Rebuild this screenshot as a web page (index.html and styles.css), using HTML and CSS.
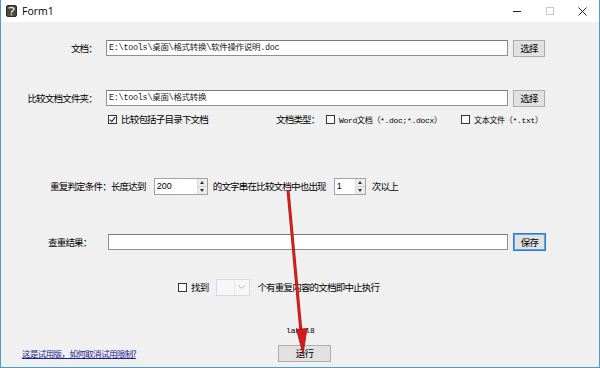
FILE: index.html
```html
<!DOCTYPE html>
<html lang="zh-CN">

<head>
    <meta charset="UTF-8">
    <meta name="viewport" content="width=device-width, initial-scale=1.0">
    <title>Form1</title>

    <link rel="stylesheet" href="styles.css">
</head>

<body>
    <div class="window">
        <div class="titlebar">
            <svg class="app-icon" width="11" height="12" viewBox="0 0 11 12">
                <rect x="0.5" y="0.5" width="10" height="11" rx="1.5" fill="#4a4a42" stroke="#2a2a26" />
                <path d="M3 3.5 C3 2, 8 2, 8 4 C8 6, 5 5.5, 5.5 8" fill="none" stroke="#e8e2c8" stroke-width="1.4" />
                <circle cx="5.5" cy="9.6" r="0.9" fill="#e8e2c8" />
            </svg>
            <span class="caption">Form1</span>
            <div class="caption-btns">
                <span class="cbtn"><i class="ico-min"></i></span>
                <span class="cbtn"><i class="ico-max"></i></span>
                <span class="cbtn">
                    <svg width="9" height="9" viewBox="0 0 9 9">
                        <path d="M0.5 0.5 L8.5 8.5 M8.5 0.5 L0.5 8.5" stroke="#222" stroke-width="1" />
                    </svg>
                </span>
            </div>
        </div>

        <div class="client">
            <div class="row row-doc">
                <span class="lbl">文档：</span>
                <div class="field">E:\tools\桌面\格式转换\软件操作说明.doc</div>
                <button class="btn">选择</button>
            </div>

            <div class="row row-dir">
                <span class="lbl">比较文档文件夹：</span>
                <div class="field">E:\tools\桌面\格式转换</div>
                <button class="btn">选择</button>
            </div>

            <div class="row row-opts">
                <label class="check check-sub"><span class="box checked"></span>比较包括子目录下文档</label>
                <span class="type-lbl">文档类型：</span>
                <label class="check check-word"><span class="box"></span><span class="mono">Word文档（*.doc;*.docx）</span></label>
                <label class="check"><span class="box"></span><span class="mono">文本文件（*.txt）</span></label>
            </div>

            <div class="row row-cond">
                <span>重复判定条件：长度达到</span>
                <div class="spin spin-len">
                    <span class="spin-val">200</span>
                    <span class="spin-btns"><i class="up"></i><i class="down"></i></span>
                </div>
                <span class="after-len">的文字串在比较文档中也出现</span>
                <div class="spin spin-count">
                    <span class="spin-val">1</span>
                    <span class="spin-btns"><i class="up"></i><i class="down"></i></span>
                </div>
                <span class="after-count">次以上</span>
            </div>

            <div class="row row-result">
                <span class="lbl-result">查重结果：</span>
                <div class="field field-result"></div>
                <button class="btn btn-default">保存</button>
            </div>

            <div class="row row-stop">
                <label class="check"><span class="box"></span>找到</label>
                <div class="combo">
                    <span class="combo-val"></span>
                    <svg width="7" height="4" viewBox="0 0 7 4">
                        <path d="M0.5 0.5 L3.5 3.5 L6.5 0.5" fill="none" stroke="#b5b5b5" />
                    </svg>
                </div>
                <span class="after-combo">个有重复内容的文档即中止执行</span>
            </div>

            <div class="row row-label8">
                <span class="label8">label8</span>
            </div>

            <div class="row row-run">
                <div class="link-cell"><a class="trial-link" href="#">这是试用版，如何取消试用限制?</a></div>
                <button class="btn btn-run">运行</button>
            </div>
        </div>
    </div>

    <!-- red arrow drawn over the form -->
    <svg class="arrow" viewBox="0 0 600 368">
        <line x1="288" y1="190" x2="301" y2="332" stroke="#b81616" stroke-width="3" />
        <line x1="288" y1="190" x2="301" y2="332" stroke="#dc2020" stroke-width="1.4" />
        <polygon points="303,354 296.5,329.5 307,328.5" fill="#d41a1a" stroke="#a81010" stroke-width="0.8" />
    </svg>
</body>

</html>
```

FILE: styles.css
```css
* {
    box-sizing: border-box;
}

body {
    position: relative;
    margin: 0;
    font-family: "Noto Sans CJK SC", sans-serif;
    font-size: 9.5px;
    letter-spacing: -0.8px;
    color: #000;
}

.window {
    width: 600px;
    height: 368px;
    display: flex;
    flex-direction: column;
    background: #f0f0f0;
    border: 1px solid #4b9cc8;
    border-top: 0;
}

/* title bar */

.titlebar {
    flex: none;
    height: 22px;
    display: flex;
    align-items: center;
    padding-left: 5px;
    background: #fff;
}

.caption {
    margin-left: 5px;
    font-family: "Open Sans", "Noto Sans", sans-serif;
    font-size: 10.5px;
    letter-spacing: 0;
    color: #000;
}

.caption-btns {
    margin-left: auto;
    display: flex;
    height: 100%;
}

.cbtn {
    width: 33px;
    display: flex;
    align-items: center;
    justify-content: center;
}

.ico-min {
    width: 8px;
    height: 1px;
    background: #222;
}

.ico-max {
    width: 8px;
    height: 8px;
    border: 1px solid #c6c6c6;
}

/* client area */

.client {
    flex: 1;
    display: flex;
    flex-direction: column;
}

.row {
    flex: none;
    height: 18px;
    display: flex;
    align-items: center;
    white-space: nowrap;
}

.row-doc {
    margin-top: 17px;
}

.row-dir {
    margin-top: 32px;
}

.row-opts {
    margin-top: 4px;
    height: 16px;
    padding-left: 107px;
}

.row-cond {
    margin-top: 50px;
    padding-left: 49px;
}

.row-result {
    margin-top: 37px;
    height: 19px;
    padding-left: 47px;
}

.row-stop {
    margin-top: 27px;
    padding-left: 177px;
}

.row-label8 {
    margin-top: 27px;
    height: 14px;
    padding-left: 285px;
}

.row-run {
    margin-top: 7px;
    padding-left: 21px;
}

.lbl {
    width: 96px;
    text-align: right;
}

.field {
    width: 402px;
    height: 16px;
    margin-left: 9px;
    padding: 1px 2px;
    background: #fff;
    border: 1px solid #8f8f8f;
    border-top-color: #7a7a7a;
    font-family: "Liberation Mono", "Noto Sans CJK SC", monospace;
    font-size: 8.5px;
    letter-spacing: -0.3px;
    line-height: 13px;
    color: #222;
    overflow: hidden;
}

.btn {
    width: 32px;
    height: 17px;
    margin-left: 5px;
    padding: 0;
    background: #e1e1e1;
    border: 1px solid #adadad;
    font-family: inherit;
    font-size: 9.5px;
    letter-spacing: inherit;
    color: #000;
}

.btn-default {
    width: 33px;
    height: 18px;
    border-color: #2a7bd0;
    box-shadow: inset 0 0 0 1px #5ea4e6;
}

.btn-run {
    width: 53px;
    margin-left: 0;
}

/* checkboxes */

.check {
    display: flex;
    align-items: center;
}

.box {
    width: 9px;
    height: 9px;
    margin-right: 4px;
    background: #fff;
    border: 1px solid #333;
}

.box.checked {
    background: #fff url("data:image/svg+xml,%3Csvg xmlns='http://www.w3.org/2000/svg' width='7' height='7' viewBox='0 0 7 7'%3E%3Cpath d='M0.8 3.6 L2.8 5.6 L6.3 1.2' fill='none' stroke='%23222' stroke-width='1.1'/%3E%3C/svg%3E") center / 7px 7px no-repeat;
}

.check-sub {
    width: 168px;
}

.type-lbl {
    width: 50px;
}

.check-word {
    width: 135px;
}

.mono {
    font-family: "Liberation Mono", "Noto Sans CJK SC", monospace;
    font-size: 8px;
    letter-spacing: -0.3px;
}

/* spin boxes */

.spin {
    height: 17px;
    display: flex;
    background: #fff;
    border: 1px solid #a3a3a3;
}

.spin-len {
    width: 54px;
    margin-left: 8px;
}

.spin-count {
    width: 32px;
    margin-left: 8px;
}

.spin-val {
    flex: 1;
    padding-left: 2px;
    font-family: "Liberation Sans", sans-serif;
    font-size: 9px;
    letter-spacing: 0;
    line-height: 14px;
}

.spin-btns {
    width: 10px;
    display: flex;
    flex-direction: column;
    background: #ececec;
    border-left: 1px solid #dcdcdc;
}

.spin-btns i {
    flex: 1;
    display: flex;
    align-items: center;
    justify-content: center;
}

.spin-btns i::after {
    content: "";
    border-left: 2.5px solid transparent;
    border-right: 2.5px solid transparent;
}

.spin-btns .up {
    border-bottom: 1px solid #d0d0d0;
}

.spin-btns .up::after {
    border-bottom: 3px solid #333;
}

.spin-btns .down::after {
    border-top: 3px solid #333;
}

.after-len {
    margin-left: 5px;
}

.after-count {
    margin-left: 6px;
}

.lbl-result {
    width: 60px;
}

.field-result {
    width: 400px;
    margin-left: 0;
}

/* combo box */

.combo {
    width: 34px;
    height: 17px;
    margin-left: 8px;
    display: flex;
    align-items: center;
    padding-right: 4px;
    background: #f7f7f7;
    border: 1px solid #dadada;
}

.combo-val {
    flex: 1;
    height: 100%;
    border-right: 1px solid #e6e6e6;
    margin-right: 3px;
}

.after-combo {
    margin-left: 7px;
}

.label8 {
    font-family: "Liberation Mono", monospace;
    font-size: 8px;
    letter-spacing: 0;
}

.link-cell {
    width: 256px;
}

.trial-link {
    font-size: 8.5px;
    letter-spacing: -0.6px;
    color: #1d1d8e;
    text-decoration: underline;
}

.arrow {
    position: absolute;
    left: 0;
    top: 0;
    width: 600px;
    height: 368px;
    pointer-events: none;
}
```
